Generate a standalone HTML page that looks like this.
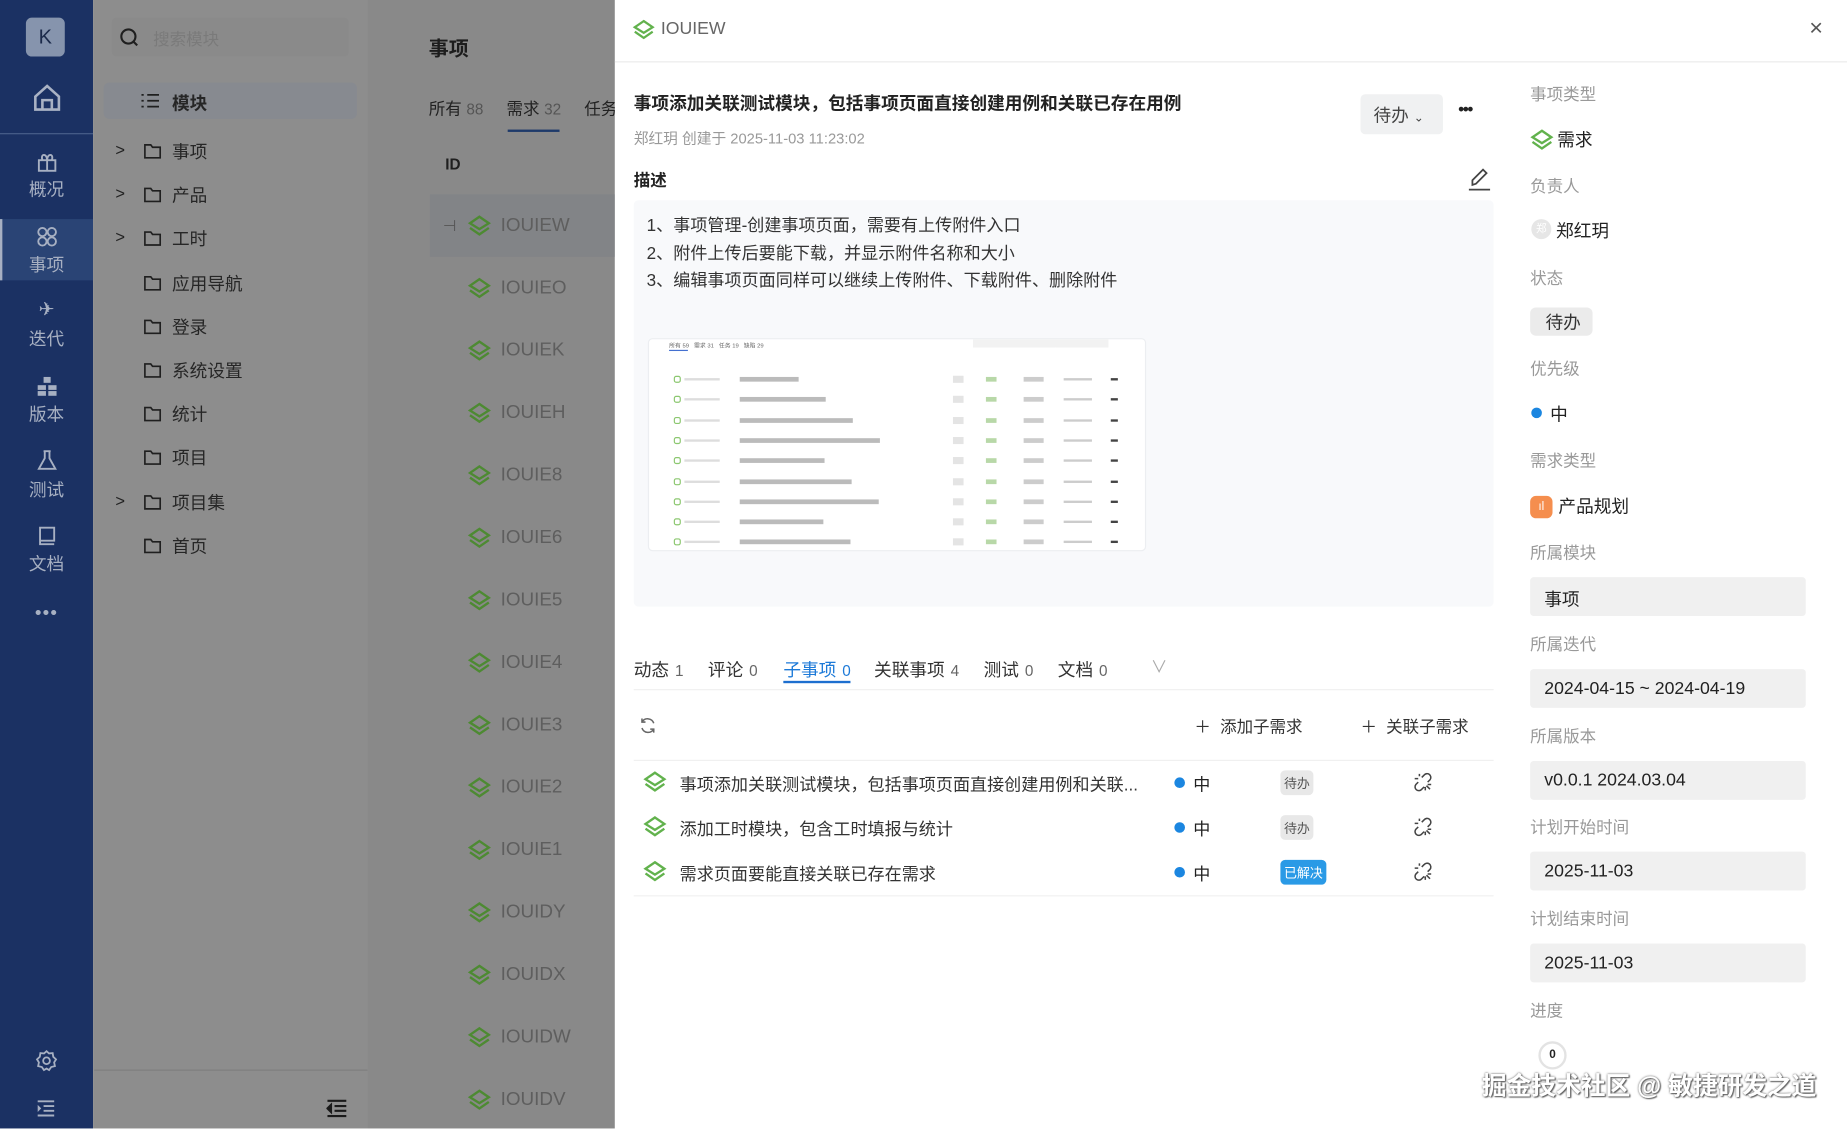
<!DOCTYPE html>
<html><head><meta charset="utf-8"><style>
*{margin:0;padding:0;box-sizing:border-box}
html,body{width:1847px;height:1129px;overflow:hidden;background:#fff}
body{font-family:"Liberation Sans","Noto Sans CJK SC",sans-serif;color:#222}
#w{position:absolute;left:0;top:0;width:1568px;height:958px;transform:scale(1.17793);transform-origin:0 0}
.a{position:absolute;white-space:nowrap}
.sb{left:0;top:0;width:79px;height:958px;background:#1b3163}
.nv{left:0;width:79px;text-align:center;color:#a7b0c2;font-size:15px}
.mp{left:79px;top:0;width:233px;height:958px;background:#8d8d8d}
.ls{left:312px;top:0;width:210px;height:958px;background:#898989}
.ti{font-size:15px;color:#262626}
.rid{font-size:16px;color:#5e5e5e}
.dr{left:522px;top:0;width:1046px;height:958px;background:#fff}
.lb{font-size:14px;color:#999}
.bx{left:1299px;width:234px;height:33px;background:#f0f0f0;border-radius:3px;font-size:15px;color:#222;padding:8px 12px}
.tb{font-size:15px;color:#333}
.tb span{font-size:13px;color:#666;margin-left:5px}
</style></head><body><div id="w">
<!-- sidebar -->
<div class="a sb"></div>
<div class="a" style="left:22px;top:15px;width:33px;height:33px;background:#8694ad;border-radius:5px;color:#1b2a4a;font-size:17px;text-align:center;line-height:33px">K</div>
<svg class="a" style="left:27px;top:70px" width="26" height="26" viewBox="0 0 26 26" fill="none" stroke="#a9b2c4" stroke-width="2.2"><path d="M3 12 L13 3 L23 12 V23 H3 Z M9 23 V15 H17 V23"/></svg>
<div class="a" style="left:0;top:113px;width:79px;height:1px;background:#4a5f8a"></div>
<svg class="a" style="left:31px;top:128px" width="18" height="18" viewBox="0 0 18 18" fill="none" stroke="#a7b0c2" stroke-width="1.6"><rect x="2" y="8" width="14" height="9"/><path d="M9 8 V17 M5 8 C3 2 9 2 9 8 C9 2 15 2 13 8"/></svg>
<div class="a nv" style="top:150px">概况</div>
<div class="a" style="left:0;top:186px;width:79px;height:52px;background:#2a4475"></div>
<div class="a" style="left:0;top:186px;width:2px;height:52px;background:#a7b0c2"></div>
<svg class="a" style="left:31px;top:192px" width="18" height="18" viewBox="0 0 18 18" fill="none" stroke="#a7b0c2" stroke-width="1.6"><circle cx="5" cy="5" r="3.5"/><circle cx="13" cy="5" r="3.5"/><circle cx="5" cy="13" r="3.5"/><circle cx="13" cy="13" r="3.5"/></svg>
<div class="a nv" style="top:214px">事项</div>
<div class="a nv" style="top:253px;font-size:16px">✈</div>
<div class="a nv" style="top:277px">迭代</div>
<svg class="a" style="left:31px;top:319px" width="18" height="18" viewBox="0 0 18 18" fill="#a7b0c2"><rect x="6" y="1" width="6" height="5"/><rect x="1" y="8" width="7" height="4"/><rect x="10" y="8" width="7" height="4"/><rect x="1" y="13" width="7" height="4"/><rect x="10" y="13" width="7" height="4"/></svg>
<div class="a nv" style="top:341px">版本</div>
<svg class="a" style="left:31px;top:382px" width="18" height="18" viewBox="0 0 18 18" fill="none" stroke="#a7b0c2" stroke-width="1.6"><path d="M6 1 H12 M7 1 V7 L2 16 H16 L11 7 V1"/></svg>
<div class="a nv" style="top:405px">测试</div>
<svg class="a" style="left:31px;top:446px" width="18" height="18" viewBox="0 0 18 18" fill="none" stroke="#a7b0c2" stroke-width="1.6"><path d="M3 2 H15 V13 H3 Z M3 13 V16 H15"/></svg>
<div class="a nv" style="top:468px">文档</div>
<div class="a nv" style="top:512px;font-size:16px;letter-spacing:1px">•••</div>
<svg class="a" style="left:30px;top:891px" width="19" height="19" viewBox="0 0 20 20" fill="none" stroke="#a7b0c2" stroke-width="1.6"><circle cx="10" cy="10" r="3"/><path d="M10 1.5 L12.2 3.5 L15.5 3.2 L16 6.5 L18.5 8.8 L16.8 11.5 L17.5 14.8 L14.2 15.6 L12.3 18.3 L10 17 L7.7 18.3 L5.8 15.6 L2.5 14.8 L3.2 11.5 L1.5 8.8 L4 6.5 L4.5 3.2 L7.8 3.5 Z"/></svg>
<svg class="a" style="left:31px;top:933px" width="16" height="16" viewBox="0 0 16 16" fill="none" stroke="#a7b0c2" stroke-width="1.6"><path d="M1 2 H15 M6 6 H15 M6 10 H15 M1 14 H15"/><path d="M1 5 L4 8 L1 11" fill="#a7b0c2" stroke="none"/></svg>
<!-- menu panel -->
<div class="a mp"></div>
<div class="a" style="left:95px;top:15px;width:201px;height:33px;background:#8a8a8a;border-radius:4px"></div>
<svg class="a" style="left:101px;top:23px" width="17" height="17" viewBox="0 0 17 17" fill="none" stroke="#1f1f1f" stroke-width="1.8"><circle cx="8" cy="8" r="6"/><path d="M12.5 12.5 L15.5 15.5"/></svg>
<div class="a" style="left:130px;top:23px;font-size:14px;color:#7a7a7a">搜索模块</div>
<div class="a" style="left:88px;top:70px;width:215px;height:31px;background:#878a90;border-radius:5px"></div>
<svg class="a" style="left:120px;top:79px" width="15" height="13" viewBox="0 0 15 13" fill="none" stroke="#1f1f1f" stroke-width="1.5"><path d="M0 1.5 H2 M5 1.5 H15 M0 6.5 H2 M5 6.5 H15 M0 11.5 H2 M5 11.5 H15"/></svg>
<div class="a ti" style="left:146px;top:77px;font-weight:bold">模块</div>
<div id="tree"></div>
<div class="a" style="left:80px;top:908px;width:232px;height:1px;background:#7e7e7e"></div>
<svg class="a" style="left:277px;top:933px" width="18" height="16" viewBox="0 0 18 16" fill="none" stroke="#1a1a1a" stroke-width="1.8"><path d="M1 1.5 H17 M7 6 H17 M7 10 H17 M1 14.5 H17"/><path d="M4 5 L1 8 L4 11 Z" fill="#1a1a1a"/></svg>
<!-- list -->
<div class="a ls"></div>
<div class="a" style="left:364px;top:27px;font-size:17px;font-weight:bold;color:#1d1d1d">事项</div>
<div class="a" style="left:364px;top:82px;font-size:14px;color:#222">所有 <span style="color:#555;font-size:13px">88</span></div>
<div class="a" style="left:430px;top:82px;font-size:14px;color:#222">需求 <span style="color:#555;font-size:13px">32</span></div>
<div class="a" style="left:496px;top:82px;font-size:14px;color:#222">任务</div>
<div class="a" style="left:431px;top:110px;width:44px;height:2px;background:#1e3a6a"></div>
<div class="a" style="left:378px;top:132px;font-size:13px;color:#1f1f1f;font-weight:bold">ID</div>
<div class="a" style="left:365px;top:165px;width:157px;height:53px;background:#828487"></div>
<div class="a" style="left:376px;top:184px;font-size:13px;color:#555">⊣</div>
<div id="rows"></div>
<!-- drawer -->
<div class="a dr"></div>
<div class="a" style="left:522px;top:52px;width:1046px;height:1px;background:#ebebeb"></div>
<svg class="a" style="left:537px;top:16px" width="19" height="19" viewBox="0 0 20 20" fill="none" stroke="#62b24d" stroke-width="2"><path d="M10 2 L18 7.5 L10 12.5 L2 7.5 Z"/><path d="M2 11.5 L10 17 L18 11.5"/></svg>
<div class="a" style="left:561px;top:16px;font-size:15px;color:#666">IOUIEW</div>
<div class="a" style="left:1536px;top:13px;font-size:20px;color:#555">×</div>
<div class="a" style="left:538px;top:77px;font-size:15px;font-weight:bold;color:#222">事项添加关联测试模块，包括事项页面直接创建用例和关联已存在用例</div>
<div class="a" style="left:538px;top:107px;font-size:12.5px;color:#999">郑红玥 创建于 2025-11-03 11:23:02</div>
<div class="a" style="left:1155px;top:80px;width:70px;height:34px;background:#f0f1f2;border-radius:4px;font-size:15px;color:#444;padding:7px 0 0 11px">待办 <span style="font-size:10px">⌄</span></div>
<div class="a" style="left:1238px;top:84px;font-size:14px;color:#222;letter-spacing:-1px;font-weight:bold">•••</div>
<div class="a" style="left:538px;top:143px;font-size:14px;font-weight:bold;color:#222">描述</div>
<svg class="a" style="left:1246px;top:141px" width="20" height="22" viewBox="0 0 20 22" fill="none" stroke="#444" stroke-width="1.5"><path d="M4 16 L4 12 L13 3 L16 6 L7 15 Z"/><path d="M1 20 H19"/></svg>
<div class="a" style="left:538px;top:170px;width:730px;height:345px;background:#f8f9fb;border-radius:4px"></div>
<div class="a" style="left:549px;top:181px;font-size:14.5px;color:#333;line-height:23.5px">1、事项管理-创建事项页面，需要有上传附件入口<br>2、附件上传后要能下载，并显示附件名称和大小<br>3、编辑事项页面同样可以继续上传附件、下载附件、删除附件</div>
<div class="a" style="left:550px;top:287px;width:423px;height:181px;background:#fff;border:1px solid #eceef1;border-radius:4px;overflow:hidden" id="shot"></div>
<!-- tabs -->
<div class="a tb" style="left:538px;top:558px">动态<span>1</span></div>
<div class="a tb" style="left:601px;top:558px">评论<span>0</span></div>
<div class="a tb" style="left:665px;top:558px;color:#1d7ad8">子事项<span style="color:#1d7ad8">0</span></div>
<div class="a" style="left:665px;top:578px;width:57px;height:2px;background:#1d6fcf"></div>
<div class="a tb" style="left:742px;top:558px">关联事项<span>4</span></div>
<div class="a tb" style="left:835px;top:558px">测试<span>0</span></div>
<div class="a tb" style="left:898px;top:558px">文档<span>0</span></div>
<div class="a" style="left:977px;top:556px;font-size:14px;color:#aaa">∨</div>
<div class="a" style="left:538px;top:585px;width:730px;height:1px;background:#f0f0f0"></div>
<svg class="a" style="left:542px;top:608px" width="16" height="16" viewBox="0 0 16 16" fill="none" stroke="#666" stroke-width="1.3"><path d="M13 6 A5.5 5.5 0 0 0 3 5 M3 10 A5.5 5.5 0 0 0 13 11"/><path d="M3 2 V5 H6 M13 14 V11 H10"/></svg>
<div class="a" style="left:1014px;top:607px;font-size:14px;color:#333">＋&nbsp; 添加子需求</div>
<div class="a" style="left:1155px;top:607px;font-size:14px;color:#333">＋&nbsp; 关联子需求</div>
<div class="a" style="left:538px;top:645px;width:730px;height:1px;background:#f0f0f0"></div>
<div id="subs"></div>
<div class="a" style="left:538px;top:760px;width:730px;height:1px;background:#f0f0f0"></div>
<!-- right panel -->
<div id="rp"></div>
<div class="a" style="left:1306px;top:884px;width:24px;height:24px;border:2px solid #e3e3e3;border-radius:50%;font-size:10px;font-weight:bold;text-align:center;line-height:20px;color:#222">0</div>
<div class="a" style="left:1258px;top:906px;font-size:21px;color:#fff;text-shadow:0 0 2px #555,1px 1px 1px #666;font-weight:bold">掘金技术社区 @ 敏捷研发之道</div>
</div>
<script>
function L(c){return '<svg width="20" height="20" viewBox="0 0 20 20" fill="none" stroke="'+c+'" stroke-width="2"><path d="M10 2 L18 7.5 L10 12.5 L2 7.5 Z"/><path d="M2 11.5 L10 17 L18 11.5"/></svg>';}
var h='';
var t=[['事项',1],['产品',1],['工时',1],['应用导航',0],['登录',0],['系统设置',0],['统计',0],['项目',0],['项目集',1],['首页',0]];
t.forEach(function(x,i){var y=119+i*37.2;
if(x[1])h+='<div class="a" style="left:98px;top:'+y+'px;font-size:14px;color:#222">&gt;</div>';
h+='<svg class="a" style="left:122px;top:'+(y+3)+'px" width="15" height="13" viewBox="0 0 15 13" fill="none" stroke="#1f1f1f" stroke-width="1.4"><path d="M1 1 H6 L7.5 3 H14 V12 H1 Z"/></svg>';
h+='<div class="a ti" style="left:146px;top:'+(y-1)+'px">'+x[0]+'</div>';});
document.getElementById('tree').outerHTML=h;
h='';
['IOUIEW','IOUIEO','IOUIEK','IOUIEH','IOUIE8','IOUIE6','IOUIE5','IOUIE4','IOUIE3','IOUIE2','IOUIE1','IOUIDY','IOUIDX','IOUIDW','IOUIDV'].forEach(function(s,i){var y=182+i*53;
h+='<div class="a" style="left:397px;top:'+y+'px">'+L('#4d8a32')+'</div><div class="a rid" style="left:425px;top:'+(y+1)+'px">'+s+'</div>';});
document.getElementById('rows').outerHTML=h;
h='';
[['事项添加关联测试模块，包括事项页面直接创建用例和关联...','待办'],['添加工时模块，包含工时填报与统计','待办'],['需求页面要能直接关联已存在需求','已解决']].forEach(function(r,i){var y=654+i*38;
h+='<div class="a" style="left:546px;top:'+y+'px">'+L('#62b24d')+'</div><div class="a" style="left:577px;top:'+(y+1)+'px;font-size:14.5px;color:#333">'+r[0]+'</div>';
h+='<div class="a" style="left:997px;top:'+(y+6)+'px;width:9px;height:9px;border-radius:50%;background:#1b86e0"></div><div class="a" style="left:1013px;top:'+(y+1)+'px;font-size:14.5px;color:#222">中</div>';
var res=r[1]=='已解决';
h+='<div class="a" style="left:1087px;top:'+(y)+'px;height:21px;padding:3px 3px;border-radius:4px;font-size:11px;'+(res?'background:#2a9ae6;color:#fff':'background:#e8e8e8;color:#555')+'">'+r[1]+'</div>';
h+='<svg class="a" style="left:1200px;top:'+(y+2)+'px" width="17" height="17" viewBox="0 0 17 17" fill="none" stroke="#444" stroke-width="1.3"><path d="M7 4 L9 2 A3 3 0 0 1 14 6 L12 8 M9 12 L7 14 A3 3 0 0 1 2 10 L4 8 M11 11 L14 14 M12 10 L15 10 M10 12 L10 15 M5 3 L5 1 M4 5 L1 5"/></svg>';});
document.getElementById('subs').outerHTML=h;
h='';
var lb=['事项类型','负责人','状态','优先级','需求类型','所属模块','所属迭代','所属版本','计划开始时间','计划结束时间','进度'];
lb.forEach(function(s,i){h+='<div class="a lb" style="left:1299px;top:'+(70+i*77.8)+'px">'+s+'</div>';});
h+='<div class="a" style="left:1299px;top:109px">'+L('#62b24d')+'</div><div class="a" style="left:1322px;top:108px;font-size:15px">需求</div>';
h+='<div class="a" style="left:1300px;top:186px;width:17px;height:17px;border-radius:50%;background:#e6e6e6;color:#fff;font-size:9px;text-align:center;line-height:17px">郑</div><div class="a" style="left:1321px;top:185px;font-size:15px">郑红玥</div>';
h+='<div class="a" style="left:1299px;top:261px;width:53px;height:24px;background:#ebebeb;border-radius:5px;font-size:15px;color:#333;padding:2px 0 0 13px">待办</div>';
h+='<div class="a" style="left:1300px;top:346px;width:9px;height:9px;border-radius:50%;background:#1b86e0"></div><div class="a" style="left:1316px;top:341px;font-size:15px">中</div>';
h+='<div class="a" style="left:1299px;top:421px;width:19px;height:19px;border-radius:5px;background:#f58e4e;color:#fff;font-size:10px;text-align:center;line-height:19px">ıl</div><div class="a" style="left:1323px;top:419px;font-size:15px">产品规划</div>';
[['事项',490],['2024-04-15 ~ 2024-04-19',568],['v0.0.1 2024.03.04',646],['2025-11-03',723],['2025-11-03',801]].forEach(function(b){h+='<div class="a bx" style="top:'+b[1]+'px">'+b[0]+'</div>';});
document.getElementById('rp').outerHTML=h;
// screenshot thumbnail
h='<div style="position:absolute;left:17px;top:2px;font-size:5px;color:#666">所有 59 &nbsp; 需求 31 &nbsp; 任务 19 &nbsp; 缺陷 29</div><div style="position:absolute;left:17px;top:9px;width:16px;height:1px;background:#4470d0"></div>';
h+='<div style="position:absolute;left:275px;top:0px;width:70px;height:7px;background:#f2f2f2"></div><div style="position:absolute;left:345px;top:0px;width:45px;height:7px;background:#f2f2f2"></div>';
for(var i=0;i<9;i++){var y=31+i*17.3;
h+='<div style="position:absolute;left:21px;top:'+y+'px;width:6px;height:6px;border:1px solid #8cc770;border-radius:2px"></div><div style="position:absolute;left:30px;top:'+(y+2)+'px;width:30px;height:2px;background:#ddd"></div>';
h+='<div style="position:absolute;left:77px;top:'+(y+1)+'px;width:'+(50+(i*23%70))+'px;height:4px;background:#bbb"></div>';
h+='<div style="position:absolute;left:258px;top:'+y+'px;width:9px;height:6px;background:#e4e4e4"></div><div style="position:absolute;left:286px;top:'+(y+1)+'px;width:9px;height:4px;background:#b8d8a8"></div>';
h+='<div style="position:absolute;left:318px;top:'+(y+1)+'px;width:17px;height:4px;background:#ccc"></div><div style="position:absolute;left:352px;top:'+(y+2)+'px;width:24px;height:2px;background:#ccc"></div><div style="position:absolute;left:392px;top:'+(y+2)+'px;width:6px;height:2px;background:#444"></div>';}
document.getElementById('shot').innerHTML=h;
</script>
</body></html>
